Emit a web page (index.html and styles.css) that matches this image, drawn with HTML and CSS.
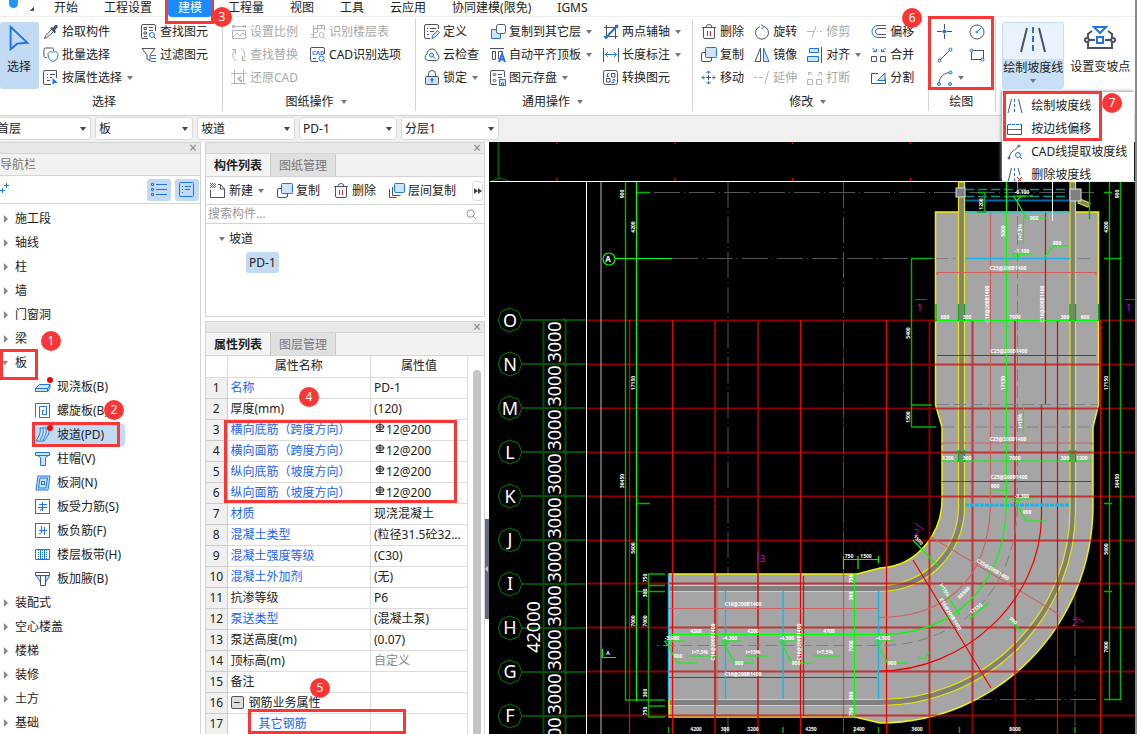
FILE: index.html
```html
<!DOCTYPE html>
<html lang="zh-CN">
  <head>
    <meta charset="UTF-8" />
    <meta name="viewport" content="width=device-width, initial-scale=1.0" />
    <title>坡道 PD-1</title>
    <link rel="stylesheet" href="styles.css">
  </head>
  <body>
    <!-- Icon sprite -->
    <svg class="sprite" aria-hidden="true">
      <symbol id="i-cursor" viewBox="0 0 24 30"><path class="b w2" d="M3 2v24l7-6 11-1z" /></symbol>
      <symbol id="i-pick" viewBox="0 0 16 16"><path class="d" d="M8.500 5.500l-6 6.500-1 2.500 2.500-1 6.500-6" /><path class="df" d="M7 4l2-1 1 1 2-3 2 0 1 2-3 3 1 2-1.500 1.500z" /></symbol>
      <symbol id="i-batch" viewBox="0 0 16 16"><path class="d" d="M4 10.500H2.500A1.500 1.500 0 0 1 1 9.500v-7A1.500 1.500 0 0 1 2.500 1h7A1.500 1.500 0 0 1 10.500 2.500V4" /><path class="b" d="M10 5.500c1.500-1.500 5-1 5 2 0 4-2 6-5 7-3-1-5-3-5-7 0-3 3.500-3.500 5-2z" /></symbol>
      <symbol id="i-attr" viewBox="0 0 16 16"><path class="d" d="M8 14.500H2A1.500 1.500 0 0 1 .5 13V2A1.500 1.500 0 0 1 2 .5h11.500V8M4 4.500h1M7 4.500h5M4 7.500h1M7 7.500h2M4 10.500h3" /><path class="bf" d="M9.500 8v7l2-2h3.500z" /></symbol>
      <symbol id="i-find" viewBox="0 0 16 16"><path class="d" d="M7 14.500H2A1.500 1.500 0 0 1 .5 13V2A1.500 1.500 0 0 1 2 .5h11A1.500 1.500 0 0 1 14.500 2V7M3 3.500h2.500v2H3zM3 8h2.500v2H3zM8 3.500h4M8 6.500h4M3 12.500h3" /><circle class="b" cx="11" cy="11" r="2.500" /><path class="b" d="M13 13l2 2" /></symbol>
      <symbol id="i-filter" viewBox="0 0 16 16"><path class="d" d="M1 1.500h13L9 8v6l-3-2V8z" /><path class="b" d="M10 8.500h5M10 11.500h5M10 14.500h5" /></symbol>
      <symbol id="i-scale" viewBox="0 0 16 16"><path class="d" d="M1.500 1v3M14.500 1v3M1 2.500h14M4 1.500l-2 1 2 1M12 1.500l2 1-2 1M1.500 6.500h13v8h-13zM2 13l4-4 3 3 3-3 2 2" /></symbol>
      <symbol id="i-replace" viewBox="0 0 16 16"><path class="d" d="M5 14A7 7 0 0 1 4 3M4.500 7V2.500H1M10 1.500a7 7 0 0 1 2 11M11.500 9v4.500h3.500" /></symbol>
      <symbol id="i-restore" viewBox="0 0 16 16"><path class="d" d="M3.500 0v14M0 3.500h15M12.500 0v12M0 13.500h15" /><path class="df" d="M6 9l4-3.500v2.500l-2 1 3 1v3z" /></symbol>
      <symbol id="i-floor" viewBox="0 0 16 16"><path class="d" d="M3.500 1v12.500h4M3 4.500h4.500v-3h7v5M3 8.500h4.500V4.500h7M1 10.500h2M1 13.500h2M11.500 1v3" /><circle class="d" cx="11.500" cy="11" r="2.500" /><path class="d" d="M13.500 13l2 2" /></symbol>
      <symbol id="i-cad" viewBox="0 0 16 16"><path class="d" d="M8 14.500H2A1.500 1.500 0 0 1 .5 13V2A1.500 1.500 0 0 1 2 .5h11A1.500 1.500 0 0 1 14.500 2V7M3 11.500h3" /><text class="bt" x="2" y="8" font-size="6">CAD</text><circle class="b" cx="11.500" cy="11.500" r="2.500" /><path class="b" d="M13.500 13.500l2 2" /></symbol>
      <symbol id="i-define" viewBox="0 0 16 16"><path class="d" d="M6 14.500H2A1.500 1.500 0 0 1 .5 13V2A1.500 1.500 0 0 1 2 .5h11A1.500 1.500 0 0 1 14.500 2V5M3 4.500h1M6 4.500h6M3 7.500h1M6 7.500h4M3 10.500h2" /><path class="b l" d="M8 14.500l.5-3 5-5 2 2-5 5z" /></symbol>
      <symbol id="i-cloud" viewBox="0 0 16 16"><path class="d" d="M4 13.500a3.500 3.500 0 0 1-1-6.500A5 5 0 0 1 13 7 3.500 3.500 0 0 1 12.500 13.500z" /><circle class="b l" cx="7.500" cy="8" r="2" /><path class="b" d="M9 9.500l2 2" /></symbol>
      <symbol id="i-lock" viewBox="0 0 16 16"><path class="d" d="M4.500 6V4a3.500 3.500 0 0 1 7 0v2" /><rect class="d l" x="1.500" y="6.500" width="13" height="8" rx="1" /><circle class="bf" cx="8" cy="9.500" r="1.500" /><path class="b" d="M8 10v3" /></symbol>
      <symbol id="i-tofloor" viewBox="0 0 16 16"><rect class="d" x="6.500" y=".5" width="9" height="9" rx="2" /><path class="b l" d="M6.500 5.500h-5v9h9V9.500H8a2 2 0 0 1-1.500-2z" /></symbol>
      <symbol id="i-align-top" viewBox="0 0 16 16"><path class="d" d="M0 1.500h14M2.500 4.500h3v8h-3zM8.500 12V4.500h4V7" /><path class="b w2" d="M9 15l3-8 3 8M10 12.500h4" /></symbol>
      <symbol id="i-save" viewBox="0 0 16 16"><path class="d" d="M7 14.500H2A1.500 1.500 0 0 1 .5 13V2A1.500 1.500 0 0 1 2 .5h11A1.500 1.500 0 0 1 14.500 2V7M8 4.500h4M8 7.500h4" /><ellipse class="d" cx="4.500" cy="4.500" rx="1.500" ry="1" /><ellipse class="d" cx="4.500" cy="10.500" rx="1.500" ry="1" /><path class="b l" d="M9.500 9.500h6v6h-6zM11.500 15v-2h2v2" /></symbol>
      <symbol id="i-twopoint" viewBox="0 0 16 16"><path class="d" d="M3.500 1v14M12.500 1v14M1 3.500h14M1 12.500h14" /><path class="b w2" d="M3 13.500L14 2" /><circle class="bf" cx="14" cy="2" r="1.500" /><circle class="bf" cx="3" cy="13.500" r="1.500" /></symbol>
      <symbol id="i-length" viewBox="0 0 16 16"><path class="d" d="M.5 1v14M15.500 1v14" /><path class="b" d="M2 7.500h12M5 5L2.500 7.500 5 10M11 5l2.500 2.500L11 10" /></symbol>
      <symbol id="i-convert" viewBox="0 0 16 16"><rect class="d" x=".5" y=".5" width="14" height="14" rx="2" /><path class="d" d="M8.500 3.500h3.500V7H8.500zM3.500 8.500H7V12H3.500z" /><path class="b" d="M6.500 3.500h-2V7M3 5.500L4.500 7 6 5.500M8.500 12.500h2.500V9M9.500 10.500L11 9l1.500 1.500" /></symbol>
      <symbol id="i-delete" viewBox="0 0 16 16"><path class="d" d="M1 3.500h14M5 3.500A2.500 2.500 0 0 1 11 3.500M2.500 4v9A1.500 1.500 0 0 0 4 14.500h8a1.500 1.500 0 0 0 1.500-1.500V4" /><path class="r" d="M6.500 7v5M9.500 7v5" /></symbol>
      <symbol id="i-copy" viewBox="0 0 16 16"><path class="d" d="M4 5.500H2A1.500 1.500 0 0 0 .5 7v6A1.500 1.500 0 0 0 2 14.500h7a1.500 1.500 0 0 0 1.500-1.500V11" /><rect class="b l" x="4.500" y=".5" width="11" height="10" rx="1" /></symbol>
      <symbol id="i-layers" viewBox="0 0 16 16"><path class="d" d="M3.500 4v8.500h8M.5 6v8.500h7" /><rect class="b l" x="5.500" y=".5" width="10" height="9" rx="1" /></symbol>
      <symbol id="i-move" viewBox="0 0 16 16"><path class="d" d="M5 7.500h5M7.500 5v5" /><path class="b" d="M7.500 1v3M7.500 11v3M1 7.500h3M11 7.500h3M5.500 3l2-2 2 2M5.500 12l2 2 2-2M3 5.500l-2 2 2 2M12 5.500l2 2-2 2" /></symbol>
      <symbol id="i-rotate" viewBox="0 0 16 16"><path class="d" d="M10 2.500A6.500 6.500 0 1 1 6 2.500" /><path class="b" d="M7 .5L10 2.500 7.500 5" /></symbol>
      <symbol id="i-mirror" viewBox="0 0 16 16"><path class="d" d="M6.500 1v13.500H1z" /><path class="b l" d="M9.500 1v13.500H15z" /></symbol>
      <symbol id="i-extend" viewBox="0 0 16 16"><path class="d" d="M0 7.500h3M5 7.500h4M14.500 1L11 14" /></symbol>
      <symbol id="i-trim" viewBox="0 0 16 16"><path class="d" d="M0 7.500h7M9 2L5 14M10 7.500h1M13 7.500h2" /></symbol>
      <symbol id="i-align" viewBox="0 0 16 16"><path class="d" d="M14.500 0v16" /><path class="b l" d="M2.500 1.500h9v4h-9zM.5 9.500h11v5H.5z" /></symbol>
      <symbol id="i-break" viewBox="0 0 16 16"><path class="d" d="M.5 9.500h5v5h-5zM9.500 9.500h5v5h-5zM5.500 6L2 2.500M1.500 5.500v-3h3M10.500 6L14 2.500M14.500 5.500v-3h-3" /></symbol>
      <symbol id="i-offset" viewBox="0 0 16 16"><path class="b" d="M15 1.500H7a6 6 0 0 0 0 12h8" /><path class="d" d="M15 4.500H7.500a3 3 0 0 0 0 6H15" /></symbol>
      <symbol id="i-merge" viewBox="0 0 16 16"><path class="d" d="M.5 9.500h5v5h-5zM9.500 9.500h5v5h-5z" /><path class="b" d="M1.500 1L5 4.500M2 4.500h3.500V2M14.500 1L11 4.500M14 4.500h-3.500V2" /></symbol>
      <symbol id="i-split" viewBox="0 0 16 16"><path class="d" d="M7 3.500H.5v10h14V9" /><path class="b l" d="M6.500 10.500L14 3v7.500z" /></symbol>
      <symbol id="i-point" viewBox="0 0 16 16"><path class="d" d="M7.500 0v5M7.500 10v5M0 7.500h5M10 7.500h5" /><circle class="bf" cx="7.500" cy="7.500" r="2" /></symbol>
      <symbol id="i-circle" viewBox="0 0 16 16"><circle class="d" cx="8" cy="8" r="7" /><circle class="b" cx="8" cy="8" r="1" /><path class="b" d="M9 7l3-3" /></symbol>
      <symbol id="i-line" viewBox="0 0 16 16"><path class="d" d="M3 13L13 3" /><circle class="b l" cx="2.500" cy="13.500" r="1.500" /><circle class="b l" cx="13.500" cy="2.500" r="1.500" /></symbol>
      <symbol id="i-rect" viewBox="0 0 16 16"><rect class="d" x="2.500" y="3.500" width="12" height="9" /><circle class="b l" cx="2.500" cy="3.500" r="1.500" /><circle class="b l" cx="13.500" cy="12.500" r="1.500" /></symbol>
      <symbol id="i-arc" viewBox="0 0 16 16"><path class="d" d="M2 13C3 6 7 3 13 2.500" /><circle class="b l" cx="2" cy="14" r="1.500" /><circle class="b l" cx="13.500" cy="2.500" r="1.500" /><circle class="b l" cx="13" cy="14" r="1.500" /></symbol>
      <symbol id="i-road" viewBox="0 0 28 28"><path class="d w2" d="M8 2L2 26M20 2l6 24" /><path class="b w2" d="M14 1v6M14 10v6M14 19v6" /></symbol>
      <symbol id="i-road-s" viewBox="0 0 16 16"><path class="d" d="M4.500 1L1 15M11.500 1L15 15" /><path class="b" d="M7.500 1v3M7.500 6v3M7.500 11v3" /></symbol>
      <symbol id="i-slope" viewBox="0 0 32 28"><path class="d w2" d="M8 6l-4 3v14h24V9l-4-3M4 15h7M21 15h7" /><path class="b w2" d="M10 2h12l-6 6zM13 12h6v6h-6z" /><circle class="d w2 lw" cx="3" cy="15" r="2" /><circle class="d w2 lw" cx="29" cy="15" r="2" /></symbol>
      <symbol id="i-edge" viewBox="0 0 16 16"><path class="d" d="M.5 4v9.500h14V4" /><path class="b" d="M1 8.500h14" /><path class="b" stroke-dasharray="3 1" d="M1 3.500h14" /></symbol>
      <symbol id="i-cadline" viewBox="0 0 16 16"><path class="d" d="M2 14C4 5 8 8 11 2" /><circle class="d" cx="12" cy="2" r="1" /><circle class="d" cx="2" cy="14" r="1" /><circle class="b" cx="11" cy="11" r="2.500" /><path class="b" d="M13 13l2 2" /></symbol>
      <symbol id="i-roaddel" viewBox="0 0 16 16"><path class="d" d="M4.500 1L1 15M11 1l2 7" /><path class="b" d="M7.500 1v3M7.500 6v3M7.500 11v3" /><path class="r" d="M10 10l5 5M15 10l-5 5" /></symbol>
      <symbol id="i-list" viewBox="0 0 16 16"><path class="b" d="M5 2.500h11M5 7.500h11M5 12.500h11M.5 1.500h2v2h-2zM.5 6.500h2v2h-2zM.5 11.500h2v2h-2z" /></symbol>
      <symbol id="i-card" viewBox="0 0 16 16"><rect class="b" x=".5" y=".5" width="14" height="14" rx="1" /><path class="b" d="M3 4.500h1M6 4.500h6M3 7.500h1M6 7.500h5M3 10.500h1" /></symbol>
      <symbol id="i-new" viewBox="0 0 16 16"><path class="d" d="M.5 7v7.500h14V6l-4-4.500H8M10.500 2v4h4" /><path class="b" stroke-dasharray="1 1" d="M0 .5h5M1 1.500h5M0 2.500h5M1 3.500h5M0 4.500h5" /></symbol>
      <symbol id="i-slab" viewBox="0 0 16 16"><path class="b l" d="M.5 9.500l4-4h10.500l-2 4zM.5 9.500h12v3H.5zM13 12.500l2-4v-3" /></symbol>
      <symbol id="i-spiral" viewBox="0 0 16 16"><path class="b" d="M.5 14.500V.5h14v14H4.500v-11h7v8H7.500v-4h1.500" /></symbol>
      <symbol id="i-ramp" viewBox="0 0 16 16"><path class="b l" d="M5 1c1 5-1 8-4 13h8c4-5 6-9 5-13z" /><path class="b" d="M8 2c1 4-1 7-3 11M11 2c1 4-1 7-3 11" /></symbol>
      <symbol id="i-cap" viewBox="0 0 16 16"><path class="b l" d="M.5 1.500h14v3H.5zM2.500 4.500l3 2v8h5v-8l3-2" /></symbol>
      <symbol id="i-hole" viewBox="0 0 16 16"><path class="b l" d="M3 1h12l-2 14H1z" /><path class="b" d="M5 3h7.500L11 13H3.500z" /><rect class="b" x="6.500" y="6.500" width="3" height="3" /></symbol>
      <symbol id="i-rebar1" viewBox="0 0 16 16"><rect class="b" x=".5" y=".5" width="14" height="14" /><path class="b" d="M4 5.500h8M3 8.500h9M7.500 3v9M5 11.500l3-2" /></symbol>
      <symbol id="i-rebar2" viewBox="0 0 16 16"><rect class="b" x=".5" y=".5" width="14" height="14" /><path class="b" d="M6.500 3v7M9.500 4v8M4 7.500h8M4 11l2-1" /></symbol>
      <symbol id="i-strip" viewBox="0 0 16 16"><path class="b" d="M.5 2.500h14v10H.5z" /><path class="b" stroke-dasharray="1 1" d="M3.500 3v9M7.500 3v9M11.500 3v9" /><path class="b" d="M5.500 3v9M9.500 3v9" /></symbol>
      <symbol id="i-haunch" viewBox="0 0 16 16"><path class="b l" d="M1.500 5l4 6V5M14.500 5l-4 6V5" /><path class="d" d="M.5 1.500h14v3H.5zM5.500 5v9.500h5V5" /></symbol>
      <symbol id="i-rebar" viewBox="0 0 10 10"><ellipse class="d" cx="5" cy="4" rx="4" ry="2.500" /><path class="d" d="M5 0v8M1 4h8M1 8.500h8" /></symbol>
      <symbol id="i-search" viewBox="0 0 12 12"><circle class="d" cx="5" cy="5" r="4" /><path class="d" d="M8 8l3 3" /></symbol>
    </svg>

    <header class="menu-bar">
      <span class="logo"></span>
      <span class="logo-arrow"></span>
      <nav class="menu-tabs">
        <a href="#">开始</a>
        <a href="#">工程设置</a>
        <a href="#" class="active">建模<span class="mark mark-tab"></span><span class="badge badge-3">3</span></a>
        <a href="#">工程量</a>
        <a href="#">视图</a>
        <a href="#">工具</a>
        <a href="#">云应用</a>
        <a href="#">协同建模(限免)</a>
        <a href="#">IGMS</a>
      </nav>
    </header>

    <div class="ribbon">
      <section class="group group-select">
        <div class="group-tools">
          <button type="button" class="big-btn selected select-btn"><svg><use href="#i-cursor" /></svg>选择</button>
          <div class="col">
            <button type="button" class="tool"><svg><use href="#i-pick" /></svg>拾取构件</button>
            <button type="button" class="tool"><svg><use href="#i-batch" /></svg>批量选择</button>
            <button type="button" class="tool"><svg><use href="#i-attr" /></svg>按属性选择<i class="caret"></i></button>
          </div>
          <div class="col">
            <button type="button" class="tool"><svg><use href="#i-find" /></svg>查找图元</button>
            <button type="button" class="tool"><svg><use href="#i-filter" /></svg>过滤图元</button>
          </div>
        </div>
        <h2>选择</h2>
      </section>

      <section class="group group-drawing">
        <div class="group-tools">
          <div class="col">
            <button type="button" class="tool" disabled><svg><use href="#i-scale" /></svg>设置比例</button>
            <button type="button" class="tool" disabled><svg><use href="#i-replace" /></svg>查找替换</button>
            <button type="button" class="tool" disabled><svg><use href="#i-restore" /></svg>还原CAD</button>
          </div>
          <div class="col">
            <button type="button" class="tool" disabled><svg><use href="#i-floor" /></svg>识别楼层表</button>
            <button type="button" class="tool"><svg><use href="#i-cad" /></svg>CAD识别选项</button>
          </div>
        </div>
        <h2>图纸操作<i class="caret"></i></h2>
      </section>

      <section class="group group-common">
        <div class="group-tools">
          <div class="col">
            <button type="button" class="tool"><svg><use href="#i-define" /></svg>定义</button>
            <button type="button" class="tool"><svg><use href="#i-cloud" /></svg>云检查</button>
            <button type="button" class="tool"><svg><use href="#i-lock" /></svg>锁定<i class="caret"></i></button>
          </div>
          <div class="col">
            <button type="button" class="tool"><svg><use href="#i-tofloor" /></svg>复制到其它层<i class="caret"></i></button>
            <button type="button" class="tool"><svg><use href="#i-align-top" /></svg>自动平齐顶板<i class="caret"></i></button>
            <button type="button" class="tool"><svg><use href="#i-save" /></svg>图元存盘<i class="caret"></i></button>
          </div>
          <div class="col">
            <button type="button" class="tool"><svg><use href="#i-twopoint" /></svg>两点辅轴<i class="caret"></i></button>
            <button type="button" class="tool"><svg><use href="#i-length" /></svg>长度标注<i class="caret"></i></button>
            <button type="button" class="tool"><svg><use href="#i-convert" /></svg>转换图元</button>
          </div>
        </div>
        <h2>通用操作<i class="caret"></i></h2>
      </section>

      <section class="group group-modify">
        <div class="group-tools">
          <div class="col">
            <button type="button" class="tool"><svg><use href="#i-delete" /></svg>删除</button>
            <button type="button" class="tool"><svg><use href="#i-copy" /></svg>复制</button>
            <button type="button" class="tool"><svg><use href="#i-move" /></svg>移动</button>
          </div>
          <div class="col">
            <button type="button" class="tool"><svg><use href="#i-rotate" /></svg>旋转</button>
            <button type="button" class="tool"><svg><use href="#i-mirror" /></svg>镜像</button>
            <button type="button" class="tool" disabled><svg><use href="#i-extend" /></svg>延伸</button>
          </div>
          <div class="col">
            <button type="button" class="tool" disabled><svg><use href="#i-trim" /></svg>修剪</button>
            <button type="button" class="tool"><svg><use href="#i-align" /></svg>对齐<i class="caret"></i></button>
            <button type="button" class="tool" disabled><svg><use href="#i-break" /></svg>打断</button>
          </div>
          <div class="col">
            <button type="button" class="tool"><svg><use href="#i-offset" /></svg>偏移</button>
            <button type="button" class="tool"><svg><use href="#i-merge" /></svg>合并</button>
            <button type="button" class="tool"><svg><use href="#i-split" /></svg>分割</button>
          </div>
        </div>
        <h2>修改<i class="caret"></i></h2>
      </section>

      <section class="group group-draw">
        <div class="draw-grid">
          <button type="button" class="tool" aria-label="点"><svg><use href="#i-point" /></svg></button>
          <button type="button" class="tool" aria-label="圆"><svg><use href="#i-circle" /></svg></button>
          <button type="button" class="tool" aria-label="直线"><svg><use href="#i-line" /></svg></button>
          <button type="button" class="tool" aria-label="矩形"><svg><use href="#i-rect" /></svg></button>
          <button type="button" class="tool" aria-label="弧"><svg><use href="#i-arc" /></svg><i class="caret"></i></button>
        </div>
        <h2>绘图</h2>
        <span class="mark mark-draw"></span>
        <span class="badge badge-6">6</span>
      </section>

      <section class="group group-ramp">
        <div class="ramp-menu">
          <button type="button" class="big-btn selected ramp-btn" aria-haspopup="true"><svg><use href="#i-road" /></svg><span>绘制坡度线</span><i class="caret"></i></button>
          <div class="dropdown">
            <button type="button" class="tool"><svg><use href="#i-road-s" /></svg>绘制坡度线</button>
            <button type="button" class="tool"><svg><use href="#i-edge" /></svg>按边线偏移</button>
            <button type="button" class="tool"><svg><use href="#i-cadline" /></svg>CAD线提取坡度线</button>
            <button type="button" class="tool"><svg><use href="#i-roaddel" /></svg>删除坡度线</button>
          </div>
          <span class="mark mark-menu"></span>
          <span class="badge badge-7">7</span>
        </div>
        <button type="button" class="big-btn"><svg><use href="#i-slope" /></svg><span>设置变坡点</span></button>
      </section>
    </div>

    <div class="context-bar">
      <div class="select"><select aria-label="楼层"><option>首层</option></select></div>
      <div class="select"><select aria-label="构件类别"><option>板</option></select></div>
      <div class="select"><select aria-label="构件类型"><option>坡道</option></select></div>
      <div class="select"><select aria-label="构件"><option>PD-1</option></select></div>
      <div class="select"><select aria-label="分层"><option>分层1</option></select></div>
    </div>

    <main class="workspace">
      <aside class="nav-panel">
        <div class="panel-strip"><button type="button" class="close" aria-label="关闭">×</button></div>
        <h3 class="nav-title">导航栏</h3>
        <div class="nav-tools">
          <button type="button" class="add" aria-label="添加"><svg viewBox="0 0 10 12"><path class="b" d="M6.500 1v5M4 3.500h5M2.500 6v5M0 8.500h5" /></svg></button>
          <button type="button" class="view-btn" aria-label="列表"><svg><use href="#i-list" /></svg></button>
          <button type="button" class="view-btn" aria-label="卡片"><svg><use href="#i-card" /></svg></button>
        </div>
        <ul class="tree">
          <li><a href="#">施工段</a></li>
          <li><a href="#">轴线</a></li>
          <li><a href="#">柱</a></li>
          <li><a href="#">墙</a></li>
          <li><a href="#">门窗洞</a></li>
          <li><a href="#">梁</a></li>
          <li class="open">
            <a href="#">板</a>
            <span class="mark mark-slab"></span>
            <span class="badge badge-1">1</span>
            <ul>
              <li><a href="#"><span class="ico dot"><svg><use href="#i-slab" /></svg></span>现浇板(B)</a></li>
              <li><a href="#"><span class="ico"><svg><use href="#i-spiral" /></svg></span>螺旋板(B)</a></li>
              <li class="current">
                <a href="#"><span class="ico dot"><svg><use href="#i-ramp" /></svg></span>坡道(PD)</a>
                <span class="mark mark-ramp"></span>
                <span class="badge badge-2">2</span>
              </li>
              <li><a href="#"><span class="ico"><svg><use href="#i-cap" /></svg></span>柱帽(V)</a></li>
              <li><a href="#"><span class="ico"><svg><use href="#i-hole" /></svg></span>板洞(N)</a></li>
              <li><a href="#"><span class="ico"><svg><use href="#i-rebar1" /></svg></span>板受力筋(S)</a></li>
              <li><a href="#"><span class="ico"><svg><use href="#i-rebar2" /></svg></span>板负筋(F)</a></li>
              <li><a href="#"><span class="ico"><svg><use href="#i-strip" /></svg></span>楼层板带(H)</a></li>
              <li><a href="#"><span class="ico"><svg><use href="#i-haunch" /></svg></span>板加腋(B)</a></li>
            </ul>
          </li>
          <li><a href="#">装配式</a></li>
          <li><a href="#">空心楼盖</a></li>
          <li><a href="#">楼梯</a></li>
          <li><a href="#">装修</a></li>
          <li><a href="#">土方</a></li>
          <li><a href="#">基础</a></li>
        </ul>
      </aside>

      <div class="side">
        <section class="panel list-panel">
          <div class="panel-strip"><button type="button" class="close" aria-label="关闭">×</button></div>
          <div class="tabs">
            <button type="button" class="active">构件列表</button>
            <button type="button">图纸管理</button>
          </div>
          <div class="list-tools">
            <button type="button" class="tool"><svg><use href="#i-new" /></svg>新建<i class="caret"></i></button>
            <button type="button" class="tool"><svg><use href="#i-copy" /></svg>复制</button>
            <button type="button" class="tool"><svg><use href="#i-delete" /></svg>删除</button>
            <button type="button" class="tool"><svg><use href="#i-layers" /></svg>层间复制</button>
            <button type="button" class="more" aria-label="更多"></button>
          </div>
          <label class="search">
            <input type="text" placeholder="搜索构件..." aria-label="搜索构件" />
            <svg><use href="#i-search" /></svg>
          </label>
          <ul class="parts">
            <li>坡道
              <ul><li><a href="#">PD-1</a></li></ul>
            </li>
          </ul>
        </section>

        <section class="panel prop-panel">
          <div class="panel-strip"><button type="button" class="close" aria-label="关闭">×</button></div>
          <div class="tabs">
            <button type="button" class="active">属性列表</button>
            <button type="button">图层管理</button>
          </div>
          <div class="prop-body">
            <div class="prop-scroll">
              <table>
                <thead>
                  <tr><th></th><th>属性名称</th><th>属性值</th></tr>
                </thead>
                <tbody>
                  <tr><th>1</th><td class="key">名称</td><td>PD-1</td></tr>
                  <tr><th>2</th><td>厚度(mm)</td><td>(120)</td></tr>
                  <tr><th>3</th><td class="key">横向底筋（跨度方向）</td><td><svg class="rebar"><use href="#i-rebar" /></svg>12@200</td></tr>
                  <tr><th>4</th><td class="key">横向面筋（跨度方向）</td><td><svg class="rebar"><use href="#i-rebar" /></svg>12@200</td></tr>
                  <tr><th>5</th><td class="key">纵向底筋（坡度方向）</td><td><svg class="rebar"><use href="#i-rebar" /></svg>12@200</td></tr>
                  <tr><th>6</th><td class="key">纵向面筋（坡度方向）</td><td><svg class="rebar"><use href="#i-rebar" /></svg>12@200</td></tr>
                  <tr><th>7</th><td class="key">材质</td><td>现浇混凝土</td></tr>
                  <tr><th>8</th><td class="key">混凝土类型</td><td>(粒径31.5砼32...</td></tr>
                  <tr><th>9</th><td class="key">混凝土强度等级</td><td>(C30)</td></tr>
                  <tr><th>10</th><td class="key">混凝土外加剂</td><td>(无)</td></tr>
                  <tr><th>11</th><td>抗渗等级</td><td>P6</td></tr>
                  <tr><th>12</th><td class="key">泵送类型</td><td>(混凝土泵)</td></tr>
                  <tr><th>13</th><td>泵送高度(m)</td><td>(0.07)</td></tr>
                  <tr><th>14</th><td>顶标高(m)</td><td class="muted">自定义</td></tr>
                  <tr><th>15</th><td>备注</td><td></td></tr>
                  <tr><th>16</th><td><button type="button" class="fold" aria-label="折叠">−</button>钢筋业务属性</td><td></td></tr>
                  <tr><th>17</th><td class="key child">其它钢筋</td><td></td></tr>
                </tbody>
              </table>
            </div>
            <div class="scrollbar"></div>
            <span class="mark mark-rebar"></span>
            <span class="mark mark-other"></span>
            <span class="badge badge-4">4</span>
            <span class="badge badge-5">5</span>
          </div>
        </section>
      </div>

      <div class="splitter"><span></span></div>

      <section class="canvas">
        <svg viewBox="489 142 646 592" preserveAspectRatio="xMinYMin slice" role="img" aria-label="坡道平面图">
          <defs>
            <g id="level">
              <path d="M-4-4H16M-4-4l4 5 4-5M0 1l9 17h20" />
            </g>
            <g id="axis">
              <path class="axis-ring" d="M522 0l-3.500 8.500-8.500 3.500-8.500-3.500-3.500-8.500 3.500-8.500 8.500-3.500 8.500 3.500z" />
              <path class="axis-line" d="M522 0h64" />
              <path class="axis-ring" d="M563-2l4 4" />
            </g>
          </defs>

          <!-- Frame -->
          <path class="axis-line" d="M498.500 142v38" />
          <path class="axis-ring" d="M492 181l8-3 9 3" />
          <path class="red" d="M557 142v2M675 142v2M792.500 142v2M910.500 142v2M557 178v3M675 178v3M792.500 178v3M910.500 178v3" />

          <!-- Dash-dot centre lines -->
          <path class="centre" d="M654 192.500h440M672 258.500h420M728 182v552M843.500 182v552M1075 560v174M930 699.500h170" />

          <!-- Ramp body -->
          <path class="body" d="M669 574H857L880 568C920 566 942 530 942 500V427L935.500 405V212H1098.500V405L1093 427V505C1093 625 998 723 880 723L855 717H669z" />
          <path class="wall" d="M958.500 182V507A78.500 78.500 0 0 1 880 585.500H669V591.500H880A84.500 84.500 0 0 0 964.500 507V182z" />
          <path class="wall" d="M1070 182V510A190 189.500 0 0 1 880 699.500H669V705.500H880A195.500 195.500 0 0 0 1075.500 510V182z" />
          <path class="wall" d="M1080 199l10 4-2 4-10-4z" />

          <!-- Axis grid -->
          <path class="grid" d="M587 320.500H936M1099 320.500H1135M587 364.500H1135M587 408.500H1135M587 452.500H1135M587 496.500H1135M587 540.500H1135M587 583.500H1135M587 627.500H1135M587 671.500H1135M587 715.500H1135M715 320V734M758 320V734M929.500 320V734M972.500 320V734M1015 320V734" />
          <path class="red" d="M629.500 320V734M672.500 320V734M800.500 320V734M886.500 320V734M1057.500 320V734M1100.500 320V734" />
          <path class="red dim" d="M843.500 320V734" />

          <!-- Slab rebar -->
          <path class="pale" d="M937 275v-2.500H1096v2.500M990.500 212V500C990.500 580 945 617 879 617.500M942 445v-2H1092v2M669 608.500H878M717 576V706M931 537L1060 615" />
          <path class="red" d="M937 355.500H1096M942 481.500H1091M669 677.500H877M803.500 576V715M913 560L991 688M1045.500 212V404M1041.500 405V515C1041.500 600 965 671 879 671" />
          <path class="mid" d="M1017.500 182V500C1017.500 600 950 645.500 880 645.500H657" />
          <path class="mid" d="M937 404.500H1098M942 427H1093M936 258.500H955M1078 258.500H1090" />

          <!-- Blue edges -->
          <path class="teal" d="M965 189.500H1070M965 196.500H1070" />
          <path class="navy" d="M965 200.500H1070" />
          <path class="cyan" d="M965 212H1070M965 258.500H1070M668.500 574V700M725.500 591V699M783 591V699M878.500 591V699" />
          <path class="cyan strip" d="M965 505H1070" />

          <!-- Dimension lines -->
          <path class="green" d="M625.500 182V700M648.500 574V717M665 574H648M665 585.500H648M665 591.500H636M665 700H625M665 706H648M665 717H648M636 192.500H650M636 503.500H650M911.500 258.500V427M911 258.500H932M911 405H932M911 427H936M1089.500 182V219M1109.500 182V700M1120.500 182V700M1104 192.500H1112M1104 258.500H1122M1104 503.500H1112M1104 591.500H1112M1104 699.500H1122M984.500 192V212M977 192.500H986M977 212H986" />
          <path class="lime" d="M636.500 182V701M615 258.500H672M602.500 649V657.500H616M854.500 573V717M843.500 559.500H878M843.500 556V569M858 556V569M878.500 556V563M1006.500 182V500C1006.500 590 950 634.500 880 634.500H669M936 320.500H1098.500M941 461H1092M1023.500 217V244M1023.500 405V434M913 540L937 565M941 586L960 615M969 619L989 603M1010 620l11 11M690 656h27M746 656h23M813 656h27M918 658h7l4-6M1044 258l9-12h16M989 490h18" />
          <path class="green" d="M936 304v17M958.500 304v17M964.500 304v17M1070 304v17M1075.500 304v17M1098.500 304v17M958.500 450v12M964.500 450v12M1070 450v12M1075.500 450v12M668.500 727v6M725.500 727v6M783 727v6M854.500 727v6M878.500 727v6M959.500 727v6M1075 727v6" />
          <circle class="lime" cx="609" cy="259" r="6" />
          <g class="lime">
            <use href="#level" x="668.500" y="645" />
            <use href="#level" x="725.500" y="645" />
            <use href="#level" x="783" y="645" />
            <use href="#level" x="878.500" y="645" />
            <use href="#level" x="1017" y="200" />
            <use href="#level" x="1017" y="503" />
            <path d="M1012 254h21M1012 254l5 5 4-5" />
          </g>

          <rect class="column" x="956" y="188" width="9" height="9" />
          <rect class="column" x="1070" y="189" width="11" height="12" />
          <path class="white" d="M490 181.500H1135M586.500 181V734M1052.500 182V221" />
          <path class="grey" d="M601 182V734" />

          <!-- Section marks -->
          <path class="violet" d="M915 299.500h12M1125 299.500h10M758 551v12M924 530l-9-7M1084 622l-10-5" />
          <g class="violet-text">
            <text x="917" y="311">1</text>
            <text x="1126" y="311">1</text>
            <text x="760" y="562">3</text>
            <text x="914" y="536">2</text>
            <text x="1072" y="626">2</text>
          </g>

          <!-- Axis bubbles -->
          <path class="axis-line" d="M543.500 319V734M565.500 319V734" />
          <use href="#axis" y="320" /><use href="#axis" y="364" /><use href="#axis" y="408" />
          <use href="#axis" y="452" /><use href="#axis" y="496" /><use href="#axis" y="540" />
          <use href="#axis" y="584" /><use href="#axis" y="628" /><use href="#axis" y="672" />
          <use href="#axis" y="716" />
          <g class="axis-text">
            <text x="510" y="327">O</text><text x="510" y="371">N</text><text x="510" y="415">M</text>
            <text x="510" y="459">L</text><text x="510" y="503">K</text><text x="510" y="546">J</text>
            <text x="510" y="590">I</text><text x="510" y="634">H</text><text x="510" y="678">G</text>
            <text x="510" y="722">F</text>
          </g>
          <g class="axis-text" transform="rotate(-90)">
            <text x="-342" y="561">3000</text><text x="-386" y="561">3000</text><text x="-430" y="561">3000</text>
            <text x="-474" y="561">3000</text><text x="-518" y="561">3000</text><text x="-562" y="561">3000</text>
            <text x="-606" y="561">3000</text><text x="-650" y="561">3000</text><text x="-694" y="561">3000</text>
            <text x="-738" y="561">3000</text><text x="-627" y="540">42000</text>
          </g>

          <!-- Small notes -->
          <g class="note">
            <text x="608" y="262" font-size="8">A</text><text x="608" y="655">A</text>
            <text x="1008" y="270">C25@200B1400</text><text x="1009" y="353">C25@200B1400</text>
            <text x="1008" y="441">C25@200B1400</text><text x="1009" y="479">C25@200B1400</text>
            <text x="743" y="606">C16@200B1400</text><text x="743" y="676">C16@200B1400</text>
            <text x="696" y="633">4200</text><text x="753" y="633">4200</text><text x="829" y="633">4700</text>
            <text x="672" y="640">-3.900</text><text x="730" y="640">-4.300</text><text x="787" y="640">-4.500</text><text x="883" y="640">-4.500</text>
            <text x="678" y="658">900</text><text x="739" y="665">900</text><text x="796" y="665">900</text><text x="892" y="665">900</text>
            <text x="700" y="654">i=7.5%</text><text x="753" y="654">i=15%</text><text x="825" y="654">i=7.5%</text>
            <text x="849" y="558">750</text><text x="866" y="558">1500</text>
            <text x="945" y="319">600</text><text x="967" y="319">300</text><text x="1015" y="319">7000</text><text x="1065" y="319">300</text><text x="1085" y="319">600</text>
            <text x="948" y="460">1200</text><text x="967" y="460">300</text><text x="1015" y="460">7000</text><text x="1065" y="460">300</text><text x="1082" y="460">1200</text>
            <text x="1022" y="194">-0.100</text><text x="1034" y="220">900</text><text x="1057" y="245">900</text><text x="1022" y="253">-1.100</text>
            <text x="995" y="488">900</text><text x="1022" y="498">-3.300</text><text x="1027" y="514">900</text>
            <text x="696" y="731">4200</text><text x="725" y="731">300</text><text x="753" y="731">3200</text><text x="811" y="731">4250</text><text x="859" y="731">2400</text><text x="917" y="731">3600</text><text x="1015" y="731">8000</text>
          </g>
          <g class="note" transform="rotate(-90)">
            <text x="-194" y="624">900</text><text x="-227" y="635">4200</text><text x="-383" y="635">17150</text><text x="-481" y="624">36450</text>
            <text x="-548" y="635">5600</text><text x="-621" y="635">7000</text><text x="-578" y="647">750</text><text x="-593" y="647">300</text><text x="-621" y="647">7000</text><text x="-693" y="647">300</text><text x="-711" y="647">750</text>
            <text x="-579" y="853">750</text><text x="-596" y="853">300</text><text x="-646" y="853">7000</text><text x="-696" y="853">300</text><text x="-712" y="853">750</text>
            <text x="-642" y="715">C16@200B1400</text><text x="-642" y="801">C16@200B1400</text>
            <text x="-304" y="989">C16@200B1400</text><text x="-304" y="1044">C16@200B1400</text>
            <text x="-333" y="910">5400</text><text x="-417" y="910">1500</text><text x="-231" y="1005">5000</text><text x="-383" y="1005">17150</text>
            <text x="-232" y="1022">i=7.5%</text><text x="-421" y="1022">i=15%</text><text x="-204" y="983">1200</text>
            <text x="-194" y="1119">900</text><text x="-227" y="1108">4200</text><text x="-383" y="1108">17150</text><text x="-481" y="1119">36450</text><text x="-549" y="1108">5600</text><text x="-647" y="1108">7000</text>
          </g>
          <g class="note">
            <text transform="translate(992 571) rotate(31)">C25@200B1400</text>
            <text transform="translate(949 615) rotate(58)">C16@200B1400</text>
            <text transform="translate(943 591) rotate(58)">i=15%</text>
            <text transform="translate(965 594) rotate(-45)">R8500</text>
            <text transform="translate(977 610) rotate(-38)">17150</text>
            <text transform="translate(917 541) rotate(48)">1500</text>
            <text transform="translate(1012 622) rotate(45)">900</text>
          </g>
        </svg>
      </section>
    </main>
  </body>
</html>
```
FILE: styles.css
```css
:root {
  --accent: #1a73e8;
  --light: #cfe3fb;
  --danger: #d9232e;
  --line: #d4d4d4;
  --mark: #fb3636;
}
* {
  box-sizing: border-box;
}
body {
  margin: 0;
  height: 100vh;
  display: flex;
  flex-direction: column;
  overflow: hidden;
  border-right: 2px solid #8a8a8a;
  background-color: #fff;
  color: #222;
  font-family: "Noto Sans", "Noto Sans CJK SC", sans-serif;
  font-size: 12px;
  line-height: 20px;
}
button,
input,
select {
  font: inherit;
  color: inherit;
  border: none;
  background: none;
  padding: 0;
  margin: 0;
}
a {
  color: inherit;
  text-decoration: none;
}
ul {
  list-style: none;
  margin: 0;
  padding: 0;
}
h2,
h3 {
  margin: 0;
  font-size: 12px;
  font-weight: normal;
}
button {
  white-space: nowrap;
}

/* Icons */
.sprite {
  position: absolute;
  width: 0;
  height: 0;
}
.d,
.b,
.r {
  fill: none;
  stroke: currentColor;
  stroke-width: 1;
}
.b {
  stroke: var(--accent);
}
.r {
  stroke: var(--danger);
}
.df {
  fill: currentColor;
}
.bf {
  fill: var(--accent);
}
.bt {
  fill: var(--accent);
  font-weight: bold;
}
.l {
  fill: var(--light);
}
.lw {
  fill: #fff;
}
.w2 {
  stroke-width: 2;
}
.caret {
  flex: none;
  border: 3px solid transparent;
  border-top: 4px solid #777;
  border-bottom: none;
  margin-left: 2px;
}

/* Red callouts */
.mark {
  position: absolute;
  border: 3px solid var(--mark);
  pointer-events: none;
  z-index: 3;
}
.badge {
  position: absolute;
  width: 20px;
  height: 20px;
  border-radius: 50%;
  background-color: var(--mark);
  color: #fff;
  text-align: center;
  line-height: 20px;
  z-index: 4;
}

/* Menu bar */
.menu-bar {
  display: flex;
  height: 17px;
  border-bottom: 1px solid #eee;
  line-height: 15px;
}
.logo {
  width: 9px;
  height: 8px;
  margin-left: 9px;
  border-radius: 0 0 5px 5px;
  background-color: #2196f3;
}
.logo-arrow {
  margin: 7px 7px 0 12px;
  width: 4px;
  height: 4px;
  background: linear-gradient(135deg, transparent 50%, #555 50%);
}
.menu-tabs {
  display: flex;
}
.menu-tabs a {
  position: relative;
  height: 17px;
  padding: 0 13px;
  white-space: nowrap;
}
.menu-tabs .active {
  margin: 0 3px;
  padding: 0 10px;
  background-color: #1a8cff;
  color: #fff;
  border-radius: 0 0 4px 4px;
}
.mark-tab {
  inset: -3px -2px -7px -3px;
}
.badge-3 {
  left: 44px;
  top: 7px;
}

/* Ribbon */
.ribbon {
  display: flex;
  height: 99px;
  border-bottom: 1px solid var(--line);
}
.group {
  position: relative;
  flex: none;
  margin: 2px 0 4px;
  padding: 1px 0 0 8px;
  border-right: 1px solid var(--line);
}
.group-tools {
  display: flex;
  gap: 10px;
  height: 69px;
}
.group h2 {
  display: flex;
  align-items: center;
  justify-content: center;
  gap: 5px;
  line-height: 26px;
}
.tool {
  display: flex;
  align-items: center;
  gap: 3px;
  height: 23px;
}
.tool svg {
  flex: none;
  width: 16px;
  height: 16px;
  color: #4a5264;
}
.tool:disabled {
  color: #a8a8a8;
}
.tool:disabled svg {
  --accent: #b4b4b4;
  --light: #fff;
  color: #b4b4b4;
}
.group-select {
  padding-left: 0;
  padding-right: 14px;
}
.group-select .group-tools {
  gap: 4px;
}
.group-select .col + .col {
  margin-left: 4px;
}
.group-drawing {
  padding-right: 14px;
}
.group-drawing .group-tools {
  gap: 12px;
}
.group-common {
  padding-right: 11px;
}
.group-common .group-tools {
  gap: 11px;
}
.group-modify {
  padding-right: 14px;
}
.big-btn {
  display: flex;
  flex-direction: column;
  align-items: center;
  margin-top: 2px;
  height: 67px;
  border-radius: 3px;
}
.big-btn svg {
  width: 32px;
  height: 28px;
  margin: 3px 0 4px;
  color: #4a5264;
}
.big-btn.selected {
  background-color: #c2daf3;
}
.select-btn {
  width: 39px;
  padding-right: 1px;
}
.select-btn svg {
  width: 24px;
}
.ramp-btn.selected {
  border: 1px solid #c2ddfa;
  margin-top: 2px;
  background: linear-gradient(#eaf3fd 36px, #c8dff8 36px);
}
.ramp-btn .caret {
  margin: 1px 0 0;
}
.group-draw {
  padding-right: 10px;
}
.draw-grid {
  display: grid;
  grid-template-columns: 32px 16px;
  height: 69px;
}
.mark-draw {
  inset: -3px 1px 21px -1px;
}
.badge-6 {
  left: -27px;
  top: -11px;
}
.group-ramp {
  display: flex;
  gap: 6px;
  padding-left: 6px;
  border-right: none;
}
.ramp-menu {
  position: relative;
}
.dropdown {
  position: absolute;
  top: 72px;
  left: 0;
  width: 132px;
  height: 89px;
  padding: 2px 5px;
  overflow: hidden;
  background-color: #fff;
  box-shadow: -1px -1px 3px #999;
  z-index: 2;
}
.dropdown .tool {
  gap: 8px;
}
.mark-menu {
  top: 71px;
  left: 1px;
  width: 99px;
  height: 50px;
}
.badge-7 {
  top: 73px;
  left: 100px;
}

/* Context bar */
.context-bar {
  display: flex;
  gap: 4px;
  height: 26px;
  padding: 1px 0 2px;
  margin-left: -7px;
  background-color: #f0f0f0;
}
.select {
  position: relative;
  width: 98px;
}
.select select {
  appearance: none;
  width: 100%;
  height: 23px;
  padding: 0 3px;
  border: 1px solid #d9d9d9;
  border-radius: 3px;
  background-color: #fff;
}
.select::after {
  content: "";
  position: absolute;
  right: 5px;
  top: 10px;
  border: 3px solid transparent;
  border-top: 4px solid #444;
  border-bottom: none;
  pointer-events: none;
}

/* Workspace */
.workspace {
  display: flex;
  flex: 1;
  min-height: 0;
}
.panel-strip {
  display: flex;
  flex: none;
  justify-content: flex-end;
  height: 12px;
  border-top: 1px solid var(--line);
  border-bottom: 1px solid var(--line);
  background-color: #e8e8e8;
}
.close {
  width: 14px;
  line-height: 10px;
  font-size: 14px;
  color: #888;
}

/* Navigation */
.nav-panel {
  flex: none;
  width: 201px;
  border-right: 1px solid var(--line);
}
.nav-title {
  height: 22px;
  line-height: 22px;
  border-bottom: 1px solid var(--line);
  background-color: #f2f2f2;
  color: #777;
}
.nav-tools {
  display: flex;
  align-items: center;
  gap: 4px;
  height: 28px;
  padding-right: 1px;
  border-bottom: 1px solid var(--line);
}
.add {
  margin-right: auto;
  height: 20px;
}
.add svg {
  width: 10px;
  height: 12px;
}
.view-btn {
  width: 24px;
  height: 22px;
  border-radius: 3px;
  background-color: #c2daf3;
  line-height: 0;
}
.view-btn svg {
  width: 16px;
  height: 16px;
}
.tree {
  padding-top: 3px;
  line-height: 24px;
}
.tree li {
  position: relative;
}
.tree a {
  display: flex;
  height: 24px;
  padding-left: 4px;
}
.tree > li > a::before {
  content: "";
  width: 0;
  height: 0;
  margin: 8px 7px 0 0;
  border: 4px solid transparent;
  border-left-color: #888;
  border-right: none;
}
.tree > .open > a {
  padding-left: 2px;
}
.tree > .open > a::before {
  margin: 10px 7px 0 0;
  border: 3px solid transparent;
  border-top: 4px solid #888;
  border-bottom: none;
}
.tree ul a {
  align-items: center;
  gap: 6px;
  width: 92px;
  height: 22px;
  margin: 0 0 2px 33px;
  padding-left: 2px;
  border-radius: 3px;
  white-space: nowrap;
}
.tree ul {
  padding-top: 1px;
  margin-bottom: -1px;
}
.current a {
  background-color: #c2daf3;
}
.ico {
  position: relative;
  flex: none;
  width: 16px;
  height: 16px;
  line-height: 0;
  color: #4a5264;
}
.ico svg {
  width: 16px;
  height: 16px;
}
.dot::after {
  content: "";
  position: absolute;
  right: -2px;
  top: -2px;
  width: 6px;
  height: 6px;
  border-radius: 50%;
  background-color: #f00;
}
.mark-slab {
  left: 0;
  top: -2px;
  width: 38px;
  height: 31px;
}
.badge-1 {
  left: 41px;
  top: -20px;
}
.mark-ramp {
  left: 32px;
  top: -2px;
  width: 88px;
  height: 25px;
}
.badge-2 {
  left: 104px;
  top: -24px;
}

/* Side panels */
.side {
  display: flex;
  flex-direction: column;
  gap: 4px;
  flex: none;
  width: 280px;
  margin-left: 4px;
}
.panel {
  border: 1px solid var(--line);
  border-top: none;
}
.list-panel {
  height: 175px;
}
.prop-panel {
  display: flex;
  flex-direction: column;
  flex: 1;
  min-height: 0;
  border-bottom: none;
}
.tabs {
  display: flex;
  flex: none;
  height: 23px;
  border-bottom: 1px solid var(--line);
  background-color: #f2f2f2;
}
.tabs button {
  width: 65px;
  padding-top: 2px;
  border-right: 1px solid #c8c8c8;
  background-color: #e0e0e0;
  color: #777;
}
.tabs .active {
  background-color: #f4f4f4;
  color: #222;
  font-weight: bold;
}
.list-tools {
  display: flex;
  align-items: center;
  gap: 13px;
  height: 28px;
  padding: 1px 1px 0 4px;
  border-bottom: 1px solid var(--line);
}
.list-tools .more {
  display: flex;
  align-items: center;
  justify-content: center;
  flex: none;
  margin-left: auto;
  width: 11px;
  height: 20px;
  border: 1px solid #ddd;
  border-radius: 3px;
}
.more::before,
.more::after {
  content: "";
  border: 3px solid transparent;
  border-left: 4px solid #444;
  border-right: none;
}
.search {
  display: flex;
  align-items: center;
  height: 19px;
  padding: 0 7px 0 2px;
  border-bottom: 1px solid var(--line);
}
.search input {
  flex: 1;
  min-width: 0;
  height: 18px;
  outline: none;
}
.search input::placeholder {
  color: #999;
}
.search svg {
  width: 11px;
  height: 11px;
  color: #888;
}
.parts {
  padding: 4px 0 0 23px;
  line-height: 22px;
}
.parts > li::before {
  content: "";
  display: inline-block;
  margin: 0 4px 2px -10px;
  border: 3px solid transparent;
  border-top: 4px solid #777;
  border-bottom: none;
}
.parts ul {
  margin: 2px 0 0 17px;
}
.parts a {
  display: inline-block;
  height: 21px;
  padding: 0 3px;
  line-height: 21px;
  border-radius: 3px;
  background-color: #c2daf3;
}

/* Property table */
.prop-body {
  position: relative;
  display: flex;
  flex: 1;
  min-height: 0;
}
.prop-scroll {
  flex: 1;
  overflow: hidden;
}
table {
  width: 100%;
  table-layout: fixed;
  border-collapse: collapse;
}
tr {
  height: 21px;
}
th,
td {
  height: 21px;
  padding: 0 0 0 3px;
  border-right: 1px solid #dcdcdc;
  border-bottom: 1px solid #dcdcdc;
  line-height: 20px;
  font-weight: normal;
  text-align: left;
  white-space: nowrap;
}
thead th {
  text-align: center;
  padding: 0;
}
thead th:first-child {
  width: 21px;
}
thead th:last-child {
  width: 97px;
}
tbody th {
  padding: 0;
  text-align: center;
  background-color: #f0f0f0;
  border-color: #ccc;
}
.key {
  color: #1a5fff;
}
.muted {
  color: #888;
}
.child {
  padding-left: 31px;
}
.rebar {
  width: 10px;
  height: 10px;
  margin: 0 1px 1px 1px;
}
.fold {
  width: 13px;
  height: 13px;
  margin-right: 5px;
  border: 1px solid #555;
  border-radius: 2px;
  background-color: #ddd;
  line-height: 9px;
}
.scrollbar {
  flex: none;
  width: 16px;
  padding: 14px 3px 0 5px;
}
.scrollbar::before {
  content: "";
  display: block;
  height: 100%;
  border-radius: 4px 4px 0 0;
  background-color: #c4c4c4;
}
.mark-rebar {
  left: 18px;
  top: 64px;
  width: 233px;
  height: 83px;
}
.mark-other {
  left: 42px;
  top: 353px;
  width: 158px;
  height: 25px;
}
.badge-4 {
  left: 93px;
  top: 31px;
}
.badge-5 {
  left: 104px;
  top: 322px;
}
.splitter {
  flex: none;
  width: 4px;
  padding-top: 377px;
}
.splitter span {
  display: flex;
  align-items: center;
  height: 100px;
  background-color: #636d7a;
}
.splitter span::after {
  content: "";
  border: 3px solid transparent;
  border-right-color: #c8ccd2;
  border-left: none;
}

/* CAD canvas */
.canvas {
  flex: 1;
  min-width: 0;
  background-color: #000;
}
.canvas svg {
  display: block;
  width: 100%;
  height: 100%;
}
.canvas path,
.canvas circle {
  fill: none;
}
.axis-line {
  stroke: #005000;
  stroke-width: 2;
}
.axis-ring {
  stroke: #008000;
}
.axis-text {
  fill: #fff;
  font-size: 18px;
  text-anchor: middle;
}
.canvas .body {
  fill: #a5a5a5;
  stroke: #f2f200;
  stroke-width: 1.5;
}
.canvas .wall {
  fill: #808080;
  stroke: #e6e600;
  stroke-width: 1.2;
}
.column {
  fill: #808080;
  stroke: #ddd;
}
.centre {
  stroke: #555;
  stroke-dasharray: 26 4 1 4;
}
.mid {
  stroke: #808080;
  stroke-dasharray: 12 5;
}
.grid {
  stroke: #d00000;
  stroke-width: 2;
  opacity: 0.68;
}
.red {
  stroke: #f00000;
  stroke-width: 1.2;
}
.dim {
  opacity: 0.5;
}
.pale {
  stroke: #d06060;
  stroke-width: 1.2;
}
.green {
  stroke: #00b400;
  stroke-width: 1.4;
}
.lime {
  stroke: #00ff00;
  stroke-width: 1.2;
}
.cyan {
  stroke: #18b4f0;
  stroke-width: 1.4;
}
.strip {
  stroke-width: 3;
  stroke-dasharray: 4 1;
}
.teal {
  stroke: #009090;
  stroke-width: 1.5;
  stroke-dasharray: 9 4;
}
.navy {
  stroke: #0068a8;
  stroke-width: 2;
}
.white {
  stroke: #fff;
}
.grey {
  stroke: #bbb;
}
.violet {
  stroke: #c000c0;
}
.violet-text {
  fill: #e000e0;
  font-size: 9px;
}
.note {
  fill: #fff;
  font-size: 5px;
  font-weight: bold;
  text-anchor: middle;
}
```
